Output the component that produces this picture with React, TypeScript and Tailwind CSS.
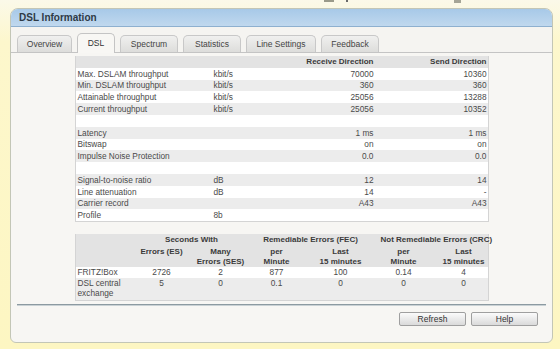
import React from 'react'

const mainRows: string[][] = [
  ['Max. DSLAM throughput', 'kbit/s', '70000', '10360'],
  ['Min. DSLAM throughput', 'kbit/s', '360', '360'],
  ['Attainable throughput', 'kbit/s', '25056', '13288'],
  ['Current throughput', 'kbit/s', '25056', '10352'],
  ['', '', '', ''],
  ['Latency', '', '1 ms', '1 ms'],
  ['Bitswap', '', 'on', 'on'],
  ['Impulse Noise Protection', '', '0.0', '0.0'],
  ['', '', '', ''],
  ['Signal-to-noise ratio', 'dB', '12', '14'],
  ['Line attenuation', 'dB', '14', '-'],
  ['Carrier record', '', 'A43', 'A43'],
  ['Profile', '8b', '', ''],
]

const tabs = [
  { label: 'Overview', w: 'w-[55px]' },
  { label: 'DSL', w: 'w-[38px]', active: true },
  { label: 'Spectrum', w: 'w-[58px]' },
  { label: 'Statistics', w: 'w-[58px]' },
  { label: 'Line Settings', w: 'w-[70px]' },
  { label: 'Feedback', w: 'w-[58px]' },
]

const errCols = 'grid grid-cols-[57px_58px_60px_52px_76px_50px_61px]'

const App = () => {
  return (
    <div className="w-[560px] h-[349px] overflow-hidden bg-gradient-to-b from-[#fbf9e9] via-[#fdf7cc] via-[12%] to-[#fdf6c2] font-['Liberation_Sans',Arial,sans-serif] text-[#4a4a4a]">
      {/* bits of the page above, cut off */}
      <div className="h-[8px] flex items-start">
        <span className="ml-[324px] w-[10px] h-[2px] bg-[#9a9a8a]"></span>
        <span className="ml-[12px] w-[2px] h-[2px] bg-[#6a6a6a]"></span>
        <span className="ml-[106px] w-[7px] h-[3px] bg-[#a5a596]"></span>
      </div>

      <div className="ml-[10px] w-[543px] h-[335px] rounded-t-[8px] rounded-b-[6px] border border-[#c3c6b6] overflow-hidden flex flex-col bg-[#f7f6f3]">
        <div className="h-[18px] shrink-0 bg-gradient-to-b from-[#a7c9e8] to-[#c0d8ee] border-b border-[#8eb0cf] flex items-center pl-[8px]">
          <span className="text-[10px] font-bold text-[#2e3a46] leading-none">DSL Information</span>
        </div>

        <div className="h-[26px] shrink-0 flex items-end gap-[5px] pl-[6px] border-b border-[#c4c4c4] bg-[#f5f4f1]">
          {tabs.map((t) =>
            t.active ? (
              <div
                key={t.label}
                className={`${t.w} h-[20px] -mb-px rounded-t-[5px] border border-b-0 border-[#c4c4c4] bg-[#f8f7f4] flex items-center justify-center text-[8.5px] text-[#333]`}
              >
                {t.label}
              </div>
            ) : (
              <div
                key={t.label}
                className={`${t.w} h-[17px] rounded-t-[5px] border border-b-0 border-[#c8c8c8] bg-gradient-to-b from-[#f0f0ef] to-[#dddddb] flex items-center justify-center text-[8.5px] text-[#444]`}
              >
                {t.label}
              </div>
            )
          )}
        </div>

        <div className="flex-1 flex flex-col pt-[3px]">
          {/* main DSL table */}
          <div className="w-[414px] mx-auto border-x border-b border-[#d4d4d4]">
            <div className="h-[11.8px] bg-[#e3e3e3] grid grid-cols-[137px_70px_93px_112px] items-center text-[8px] font-bold text-[#3a3a3a]">
              <span></span>
              <span></span>
              <span className="text-right pr-[2px]">Receive Direction</span>
              <span className="text-right pr-[1px]">Send Direction</span>
            </div>
            {mainRows.map((r, i) => (
              <div
                key={i}
                className={`h-[11.8px] grid grid-cols-[137px_70px_93px_112px] items-center text-[8.3px] leading-none ${i % 2 === 0 ? 'bg-white' : 'bg-[#ececec]'}`}
              >
                <span className="pl-[2px] whitespace-nowrap">{r[0]}</span>
                <span className="pl-[1px]">{r[1]}</span>
                <span className="text-right pr-[2px]">{r[2]}</span>
                <span className="text-right pr-[1px]">{r[3]}</span>
              </div>
            ))}
          </div>

          {/* error counters */}
          <div className="w-[414px] mx-auto mt-[12px] border-x border-b border-[#d4d4d4] text-[8.3px] leading-[10px]">
            <div className="bg-[#e3e3e3] font-bold text-[8px] text-[#3a3a3a] text-center whitespace-nowrap">
              <div className={`${errCols} h-[12px] items-center`}>
                <span></span>
                <span className="col-span-2">Seconds With</span>
                <span className="col-span-2 pr-[8px]">Remediable Errors (FEC)</span>
                <span className="col-span-2 pl-[2px]">Not Remediable Errors (CRC)</span>
              </div>
              <div className={`${errCols} h-[21px] items-start pt-px`}>
                <span></span>
                <span>Errors (ES)</span>
                <span>Many<br />Errors (SES)</span>
                <span>per<br />Minute</span>
                <span>Last<br />15 minutes</span>
                <span>per<br />Minute</span>
                <span className="pl-[9px]">Last<br />15 minutes</span>
              </div>
            </div>
            <div className={`${errCols} h-[10.5px] items-center bg-white text-center`}>
              <span className="text-left pl-[2px]">FRITZ!Box</span>
              <span>2726</span>
              <span>2</span>
              <span>877</span>
              <span>100</span>
              <span>0.14</span>
              <span className="pl-[9px]">4</span>
            </div>
            <div className={`${errCols} h-[22px] items-start bg-[#ececec] text-center`}>
              <span className="text-left pl-[2px]">DSL central<br />exchange</span>
              <span>5</span>
              <span>0</span>
              <span>0.1</span>
              <span>0</span>
              <span>0</span>
              <span className="pl-[9px]">0</span>
            </div>
          </div>

          <div className="mt-auto mx-[6px] h-[2px] border-t border-[#8c9aa1] bg-[#c9d1d4]"></div>

          <div className="h-[36px] flex justify-end gap-[5px] pr-[14px] pt-[6px]">
            <button className="w-[67px] h-[14px] rounded-[2px] border border-[#9f9f9f] bg-gradient-to-b from-[#fbfbfb] to-[#dadada] text-[8.5px] leading-none text-[#333]">
              Refresh
            </button>
            <button className="w-[67px] h-[14px] rounded-[2px] border border-[#9f9f9f] bg-gradient-to-b from-[#fbfbfb] to-[#dadada] text-[8.5px] leading-none text-[#333]">
              Help
            </button>
          </div>
        </div>
      </div>
    </div>
  )
}

export default App
